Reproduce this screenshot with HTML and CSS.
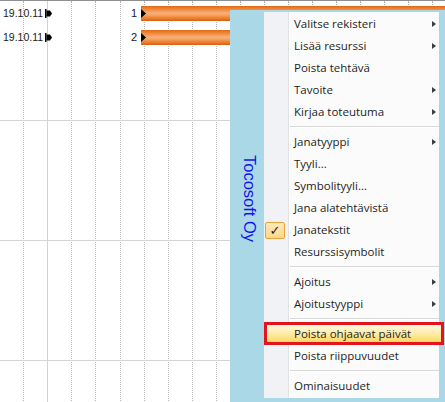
FILE: index.html
```html
<!DOCTYPE html>
<html lang="fi">
<head>
<meta charset="utf-8">
<title>Gantt</title>
<link rel="stylesheet" href="styles.css">
</head>
<body>
<div class="screen">
  <div class="gantt">
    <div class="cols">
      <div class="col"></div><div class="col solid"></div><div class="col"></div><div class="col"></div>
      <div class="col wide"></div><div class="col"></div><div class="col"></div><div class="col"></div>
      <div class="col"></div><div class="col"></div><div class="col"></div><div class="col"></div>
      <div class="col"></div><div class="col"></div><div class="col"></div><div class="col"></div>
      <div class="col"></div><div class="col"></div><div class="col"></div>
    </div>
    <div class="rows">
      <div class="row">
        <div class="task">
          <span class="date">19.10.11</span>
          <svg class="mark" width="8" height="9" viewBox="0 0 8 9"><rect x="0" y="0" width="1.5" height="9" fill="#000"/><polygon points="1.5,1.5 5,1.5 7,4.5 5,7.5 1.5,7.5" fill="#000"/></svg>
          <span class="num">1</span>
          <div class="bar long"><svg class="tri" width="6" height="9" viewBox="0 0 6 9"><polygon points="0,0 5,4.5 0,9" fill="#000"/></svg></div>
        </div>
        <div class="task">
          <span class="date">19.10.11</span>
          <svg class="mark" width="8" height="9" viewBox="0 0 8 9"><rect x="0" y="0" width="1.5" height="9" fill="#000"/><polygon points="1.5,1.5 5,1.5 7,4.5 5,7.5 1.5,7.5" fill="#000"/></svg>
          <span class="num">2</span>
          <div class="bar short"><svg class="tri" width="6" height="9" viewBox="0 0 6 9"><polygon points="0,0 5,4.5 0,9" fill="#000"/></svg></div>
        </div>
      </div>
      <div class="row"></div>
      <div class="row"></div>
      <div class="row"></div>
    </div>
  </div>

  <div class="overlay">
    <div class="brand"><span class="brand-text">Tocosoft Oy</span></div>
    <div class="menu">
      <div class="item"><span class="icon"></span><span class="label">Valitse rekisteri</span><span class="arrow"></span></div>
      <div class="item"><span class="icon"></span><span class="label">Lisää resurssi</span><span class="arrow"></span></div>
      <div class="item"><span class="icon"></span><span class="label">Poista tehtävä</span></div>
      <div class="item"><span class="icon"></span><span class="label">Tavoite</span><span class="arrow"></span></div>
      <div class="item"><span class="icon"></span><span class="label">Kirjaa toteutuma</span><span class="arrow"></span></div>
      <div class="sep"></div>
      <div class="item"><span class="icon"></span><span class="label">Janatyyppi</span><span class="arrow"></span></div>
      <div class="item"><span class="icon"></span><span class="label">Tyyli...</span></div>
      <div class="item"><span class="icon"></span><span class="label">Symbolityyli...</span></div>
      <div class="item"><span class="icon"></span><span class="label">Jana alatehtävistä</span></div>
      <div class="item"><span class="icon"><span class="check">✓</span></span><span class="label">Janatekstit</span></div>
      <div class="item"><span class="icon"></span><span class="label">Resurssisymbolit</span></div>
      <div class="sep"></div>
      <div class="item"><span class="icon"></span><span class="label">Ajoitus</span><span class="arrow"></span></div>
      <div class="item"><span class="icon"></span><span class="label">Ajoitustyyppi</span><span class="arrow"></span></div>
      <div class="sep"></div>
      <div class="item hot"><span class="icon"></span><span class="label">Poista ohjaavat päivät</span></div>
      <div class="item"><span class="icon"></span><span class="label">Poista riippuvuudet</span></div>
      <div class="sep"></div>
      <div class="item"><span class="icon"></span><span class="label">Ominaisuudet</span></div>
    </div>
  </div>
</div>
</body>
</html>
```

FILE: styles.css
```css
* { box-sizing: border-box; }
html, body { margin: 0; padding: 0; background: #fff; }

.screen {
  position: relative;
  width: 445px;
  height: 402px;
  overflow: hidden;
  font-family: "Liberation Sans", Arial, sans-serif;
}

.gantt {
  display: grid;
  width: 445px;
  height: 402px;
  border-top: 1px solid #8f8f8f;
}

.cols, .rows { grid-area: 1 / 1; }

.cols { display: flex; }
.col {
  flex: 0 0 24px;
  width: 24px;
  border-right: 1px dotted #b4b4b4;
}
.col.wide { flex-basis: 25px; width: 25px; }
.col.solid { border-right: 1px solid #d2d2d2; }

.rows { display: flex; flex-direction: column; }
.row {
  height: 120px;
  flex: 0 0 120px;
  border-bottom: 1px solid #d4d4d8;
}

.task {
  display: flex;
  align-items: center;
  height: 24px;
}
.date {
  width: 45px;
  padding-left: 3px;
  font-size: 10.5px;
  color: #1a1a24;
  white-space: nowrap;
}
.mark { display: block; flex: 0 0 8px; }
.num {
  width: 88px;
  text-align: right;
  padding-right: 4px;
  font-size: 11px;
  color: #1a1a24;
}
.bar {
  position: relative;
  height: 15px;
  display: flex;
  align-items: center;
  background: linear-gradient(to bottom, #df6a14 0%, #f08a3c 22%, #f9b07a 48%, #f6a060 62%, #e97926 85%, #d2600e 100%);
  border-radius: 0 2px 2px 0;
}
.bar.long { flex: 1; }
.bar.short { width: 92px; }
.tri { display: block; margin-left: 0; }

/* overlay: blue panel + context menu */
.overlay {
  position: absolute;
  left: 230px;
  top: 10px;
  right: 0;
  bottom: 0;
  background: #aad8e6;
  display: flex;
  align-items: flex-start;
  padding: 2px 6px 4px 0;
}

.brand {
  width: 34px;
  align-self: stretch;
  display: flex;
  align-items: center;
  justify-content: center;
  padding-left: 5px;
  padding-bottom: 12px;
}
.brand-text {
  writing-mode: vertical-rl;
  font-family: "Liberation Sans", Arial, sans-serif;
  font-size: 16.5px;
  color: #1212ee;
  white-space: nowrap;
}

.menu {
  width: 175px;
  padding: 1px 0;
  background: linear-gradient(to right, #f0f2f5 0, #f0f2f5 24px, #e1e2e4 24px, #e1e2e4 25px, #ffffff 25px, #ffffff 26px, #fbfbfb 26px);
  font-family: "Open Sans", "Noto Sans", sans-serif;
  font-size: 11.5px;
  color: #1e1e1e;
}

.item {
  position: relative;
  display: flex;
  align-items: center;
  height: 22px;
}
.icon {
  flex: 0 0 24px;
  height: 22px;
  display: flex;
  align-items: center;
  justify-content: center;
  padding-right: 2px;
}
.label {
  padding-left: 6px;
  white-space: nowrap;
  line-height: 22px;
}
.arrow {
  margin-left: auto;
  margin-right: 3px;
  width: 0;
  height: 0;
  border-left: 4px solid #3c3c3c;
  border-top: 3.5px solid transparent;
  border-bottom: 3.5px solid transparent;
}

.check {
  width: 20px;
  height: 17px;
  margin-top: 1px;
  display: flex;
  align-items: center;
  justify-content: center;
  background: linear-gradient(to bottom, #fde9b8, #fbd88a);
  border: 1px solid #e8a23c;
  border-radius: 2px;
  font-family: "DejaVu Sans", sans-serif;
  font-size: 13px;
  color: #1e1e1e;
}

.sep {
  position: relative;
  height: 8px;
  margin-left: 26px;
}
.sep::before {
  content: "";
  position: absolute;
  left: 0;
  right: 0;
  top: 3px;
  height: 1px;
  background: #d7d7d7;
  box-shadow: 0 1px 0 #ffffff;
}

.item.hot {
  margin-right: -5px;
  background: linear-gradient(to bottom, #fffbe9 0%, #fff1bd 35%, #ffe38a 65%, #ffcf45 100%);
}
.item.hot::after {
  content: "";
  position: absolute;
  left: 0;
  right: 0;
  top: -1px;
  bottom: 0;
  border: 3px solid #e3141b;
}
```
